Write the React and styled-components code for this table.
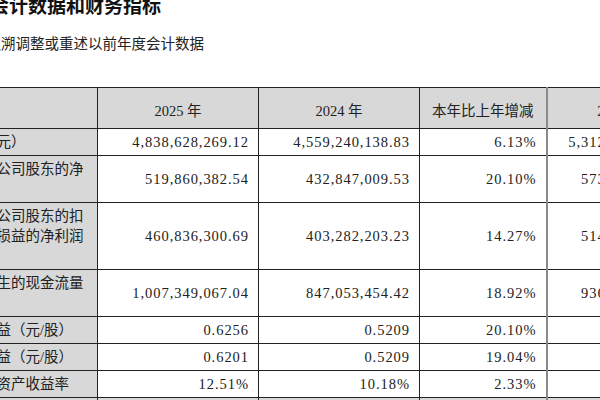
import React from 'react';
import styled, { createGlobalStyle } from 'styled-components';

const GlobalStyle = createGlobalStyle`
  html, body {
    margin: 0;
    padding: 0;
    background: #fff;
    overflow: hidden;
  }
`;

// the report page is cropped: its left edge sits off screen
const Page = styled.div`
  margin: -8px 0 0 -86px;
  width: 900px;
  color: #222;
  font-family: "Liberation Serif", "Noto Sans CJK SC", serif;
`;

const Title = styled.h2`
  margin: 0;
  font-size: 19px;
  line-height: 26px;
  font-weight: 700;
  color: #111;
  font-family: "Noto Sans CJK SC", sans-serif;
`;

const Subtitle = styled.p`
  margin: 15px 0 0;
  font-size: 14.5px;
  line-height: 20px;
  font-family: "Noto Sans CJK SC", sans-serif;
`;

const Table = styled.table`
  margin: 34px 0 0 4px;
  width: 776px;
  border-collapse: collapse;
  table-layout: fixed;
  font-size: 14.5px;
  line-height: 20px;
`;

const HeadRow = styled.tr`
  height: 41px;
`;

const HeadCell = styled.th`
  background: #d8d8d8;
  border: 1px solid #222;
  border-left: ${p => (p.$last ? '2px solid #8a8a8a' : '1px solid #222')};
  padding: 6px 9px 0;
  font-weight: 400;
  text-align: center;
  vertical-align: middle;
`;

const LabelCell = styled.td`
  background: #d8d8d8;
  border: 1px solid #222;
  padding: 3px 5px;
  text-align: left;
  vertical-align: middle;
`;

const ValueCell = styled.td`
  border: 1px solid #222;
  border-left: ${p => (p.$last ? '2px solid #8a8a8a' : '1px solid #222')};
  padding: 3px 9px;
  text-align: right;
  vertical-align: middle;
  letter-spacing: 0.95px;
  white-space: nowrap;
`;

const widths = [179, 161, 161, 127, 148];

const rows = [
  ['营业收入（元）', '4,838,628,269.12', '4,559,240,138.83', '6.13%', '5,312,786,453.21'],
  ['归属于上市公司股东的净利润（元）', '519,860,382.54', '432,847,009.53', '20.10%', '573,428,916.37'],
  ['归属于上市公司股东的扣除非经常性损益的净利润（元）', '460,836,300.69', '403,282,203.23', '14.27%', '514,672,381.05'],
  ['经营活动产生的现金流量净额（元）', '1,007,349,067.04', '847,053,454.42', '18.92%', '936,184,527.66'],
  ['基本每股收益（元/股）', '0.6256', '0.5209', '20.10%', '0.5742'],
  ['稀释每股收益（元/股）', '0.6201', '0.5209', '19.04%', '0.5742'],
  ['加权平均净资产收益率', '12.51%', '10.18%', '2.33%', '12.33%'],
];

const HeaderRow = ({ labels }) => (
  <HeadRow>
    {labels.map((label, i) => (
      <HeadCell key={i} $last={i === 4}>{label}</HeadCell>
    ))}
  </HeadRow>
);

export default function App() {
  return (
    <>
      <GlobalStyle />
      <Page>
        <Title>二、主要会计数据和财务指标</Title>
        <Subtitle>公司是否需追溯调整或重述以前年度会计数据</Subtitle>
        <Table>
          <colgroup>
            {widths.map((w, i) => <col key={i} style={{ width: w }} />)}
          </colgroup>
          <tbody>
            <HeaderRow labels={['', '2025 年', '2024 年', '本年比上年增减', '2023 年']} />
            {rows.map(([label, ...values]) => (
              <tr key={label}>
                <LabelCell>{label}</LabelCell>
                {values.map((v, i) => (
                  <ValueCell key={i} $last={i === 3}>{v}</ValueCell>
                ))}
              </tr>
            ))}
            <HeaderRow labels={['', '2025 年末', '2024 年末', '本年末比上年末增减', '2023 年末']} />
          </tbody>
        </Table>
      </Page>
    </>
  );
}
